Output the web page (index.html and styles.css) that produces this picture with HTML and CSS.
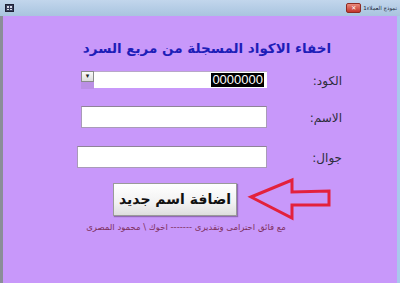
FILE: index.html
```html
<!DOCTYPE html>
<html lang="ar">
<head>
  <meta charset="UTF-8" />
  <title>نموذج العملاء1</title>
  <link rel="stylesheet" href="styles.css">
</head>
<body>
  <div class="window">
    <div class="titlebar">
      <div class="app-icon"><span></span><span></span><span></span><span></span></div>
      <div class="tab">
        <div class="close">✕</div>
        <div class="tab-title">نموذج العملاء1</div>
      </div>
    </div>

    <div class="content">
      <h1 class="heading">اخفاء الاكواد المسجلة من مربع السرد</h1>

      <div class="row row-code">
        <label class="label">الكود:</label>
        <div class="combo">
          <div class="field"><span class="selected">0000000</span></div>
          <div class="drop"><div class="drop-btn">▾</div></div>
        </div>
      </div>

      <div class="row row-name">
        <label class="label">الاسم:</label>
        <div class="input"></div>
      </div>

      <div class="row row-phone">
        <label class="label">جوال:</label>
        <div class="input wide"></div>
      </div>

      <div class="actions">
        <button class="btn">اضافة اسم جديد</button>
        <svg class="arrow" width="86" height="44" viewBox="0 0 86 44">
          <polygon points="4,20 45,3 45,15 82,14 82,28 45,28 45,41" fill="none" stroke="#e3213c" stroke-width="3" stroke-linejoin="miter"/>
        </svg>
      </div>

      <p class="footer">مع فائق احترامى وتقديرى ------- اخوك \ محمود المصرى</p>
    </div>
  </div>
</body>
</html>
```

FILE: styles.css
```css
body {
    margin: 0;
    width: 400px;
    height: 283px;
    overflow: hidden;
    font-family: 'DejaVu Sans', sans-serif;
}
.window {
    height: 283px;
    display: flex;
    flex-direction: column;
}
.titlebar {
    height: 16px;
    background: linear-gradient(#c2d6ec, #a9c4df);
    display: flex;
    align-items: center;
    justify-content: space-between;
    padding: 0 3px 0 5px;
}
.app-icon {
    width: 9px;
    height: 8px;
    background: #3a3f5c;
    border: 1px solid #1e2235;
    display: grid;
    grid-template-columns: 1fr 1fr;
    gap: 1px;
    padding: 1px;
    box-sizing: border-box;
}
.app-icon span {
    background: #d8dce8;
}
.tab {
    display: flex;
    align-items: center;
    gap: 2px;
}
.close {
    width: 13px;
    height: 8px;
    background: linear-gradient(#e98a7c, #c4332a);
    border: 1px solid #8e2a22;
    border-radius: 2px;
    color: white;
    font-size: 6px;
    line-height: 8px;
    text-align: center;
    font-weight: bold;
}
.tab-title {
    font-size: 5.5px;
    color: #1c2a3c;
    direction: rtl;
}
.content {
    flex: 1;
    background: #c898fa;
    border-left: 3px solid #8b8e98;
    border-right: 3px solid #a9c8ec;
    display: flex;
    flex-direction: column;
}
.heading {
    margin: 22px 0 0 0;
    height: 20px;
    font-size: 13.5px;
    line-height: 20px;
    font-weight: bold;
    color: #1e1eb8;
    text-align: center;
    padding-left: 14px;
    direction: rtl;
}
.row {
    display: flex;
    direction: rtl;
    align-items: center;
    margin-right: 55px;
}
.label {
    width: 75px;
    font-size: 12px;
    color: #2d2d3a;
}
.row-code {
    margin-top: 13px;
    height: 18px;
    align-items: flex-start;
}
.row-code .label {
    padding-top: 3px;
}
.combo {
    display: flex;
    direction: ltr;
    flex-direction: row-reverse;
    width: 186px;
    height: 18px;
}
.field {
    flex: 1;
    height: 16px;
    background: white;
    border-top: 1px solid #b8a8c8;
    display: flex;
    justify-content: flex-end;
    align-items: center;
    padding-right: 3px;
}
.selected {
    background: black;
    color: white;
    font-family: 'Liberation Sans', sans-serif;
    font-size: 13px;
    line-height: 14px;
    padding: 0 1px;
}
.drop {
    width: 13px;
    height: 18px;
    background: #bb8fe6;
}
.drop-btn {
    height: 11px;
    background: linear-gradient(#fafafa, #dcdcdc);
    border: 1px solid #8a8a8a;
    box-sizing: border-box;
    font-size: 7px;
    line-height: 9px;
    text-align: center;
    color: #222;
}
.row-name {
    margin-top: 17px;
}
.row-phone {
    margin-top: 18px;
}
.input {
    width: 186px;
    height: 22px;
    background: white;
    border: 1px solid #a99bb8;
    border-top-color: #8f8398;
    box-sizing: border-box;
}
.input.wide {
    width: 190px;
}
.row-name .label,
.row-phone .label {
    padding-top: 2px;
}
.actions {
    display: flex;
    align-items: center;
    gap: 10px;
    margin: 9px 0 0 110px;
}
.btn {
    width: 124px;
    height: 33px;
    background: linear-gradient(#ffffff, #f2f2f2 60%, #dedede);
    border: 1px solid #9a9a9a;
    box-shadow: 1px 1px 1px rgba(90, 60, 110, 0.5);
    font-family: 'DejaVu Sans', sans-serif;
    font-weight: bold;
    font-size: 14px;
    color: #111;
    padding: 0;
    direction: rtl;
}
.footer {
    margin: 1px 0 0 0;
    padding-right: 28px;
    font-size: 8.5px;
    line-height: 11px;
    color: #7d2f5e;
    text-align: center;
    direction: rtl;
}
```
